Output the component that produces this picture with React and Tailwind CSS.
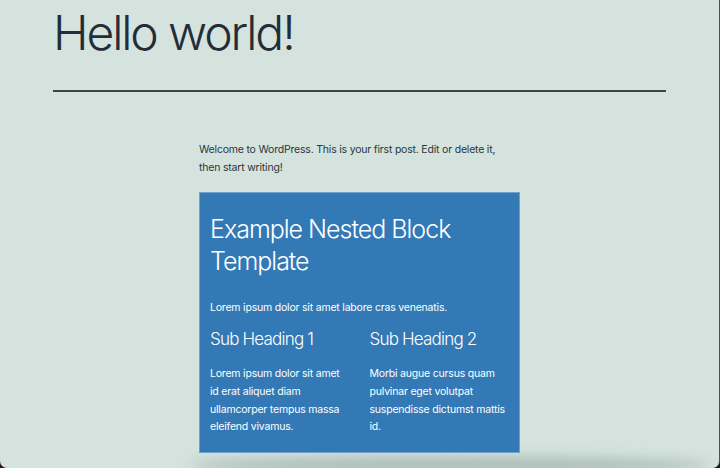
export default function App() {
  return (
    <div className="w-[720px] h-[468px] bg-[#2a1018] overflow-hidden" style={{ fontFamily: "Inter, 'Noto Sans', sans-serif" }}>
      <div className="relative w-[720px] h-[468px] bg-[#d4e3dd] rounded-b-[7px] border-r border-[#4a5057] overflow-hidden">
        <div className="px-[53px]">
          <h1 className="text-[48px] leading-[58px] font-light text-[#242c38] tracking-[-2.1px] pt-[4px]">Hello world!</h1>
          <div className="mt-[28px] h-[2px] w-[613px] bg-[#3b444d]"></div>
        </div>
        <div className="ml-[199px] w-[321px] mt-[49px]">
          <p className="text-[10.5px] leading-[18px] tracking-[-0.2px] text-[#2d3540] whitespace-nowrap">
            Welcome to WordPress. This is your first post. Edit or delete it,<br />then start writing!
          </p>
          <div className="relative z-10 mt-[15px] bg-[#3279b5] border border-[#6f9fca] px-[10px] pt-[20px] pb-[16px] text-white">
            <h2 className="text-[25px] leading-[32px] font-light tracking-[-1px]">Example Nested Block<br />Template</h2>
            <p className="mt-[22px] text-[10.5px] leading-[18px] tracking-[-0.2px]">Lorem ipsum dolor sit amet labore cras venenatis.</p>
            <div className="mt-[10px] grid grid-cols-2 gap-x-[20px]">
              <div>
                <h3 className="text-[17px] leading-[24px] font-light tracking-[-0.8px]">Sub Heading 1</h3>
                <p className="mt-[14px] text-[10.5px] leading-[17.8px] tracking-[-0.2px]">Lorem ipsum dolor sit amet id erat aliquet diam ullamcorper tempus massa eleifend vivamus.</p>
              </div>
              <div>
                <h3 className="text-[17px] leading-[24px] font-light tracking-[-0.8px]">Sub Heading 2</h3>
                <p className="mt-[14px] text-[10.5px] leading-[17.8px] tracking-[-0.2px]">Morbi augue cursus quam pulvinar eget volutpat suspendisse dictumst mattis id.</p>
              </div>
            </div>
          </div>
        </div>
        <div className="absolute left-[190px] right-[10px] bottom-[-6px] h-[18px] rounded-[50%] bg-[#9fb0aa] blur-[6px] opacity-70"></div>
      </div>
    </div>
  );
}
